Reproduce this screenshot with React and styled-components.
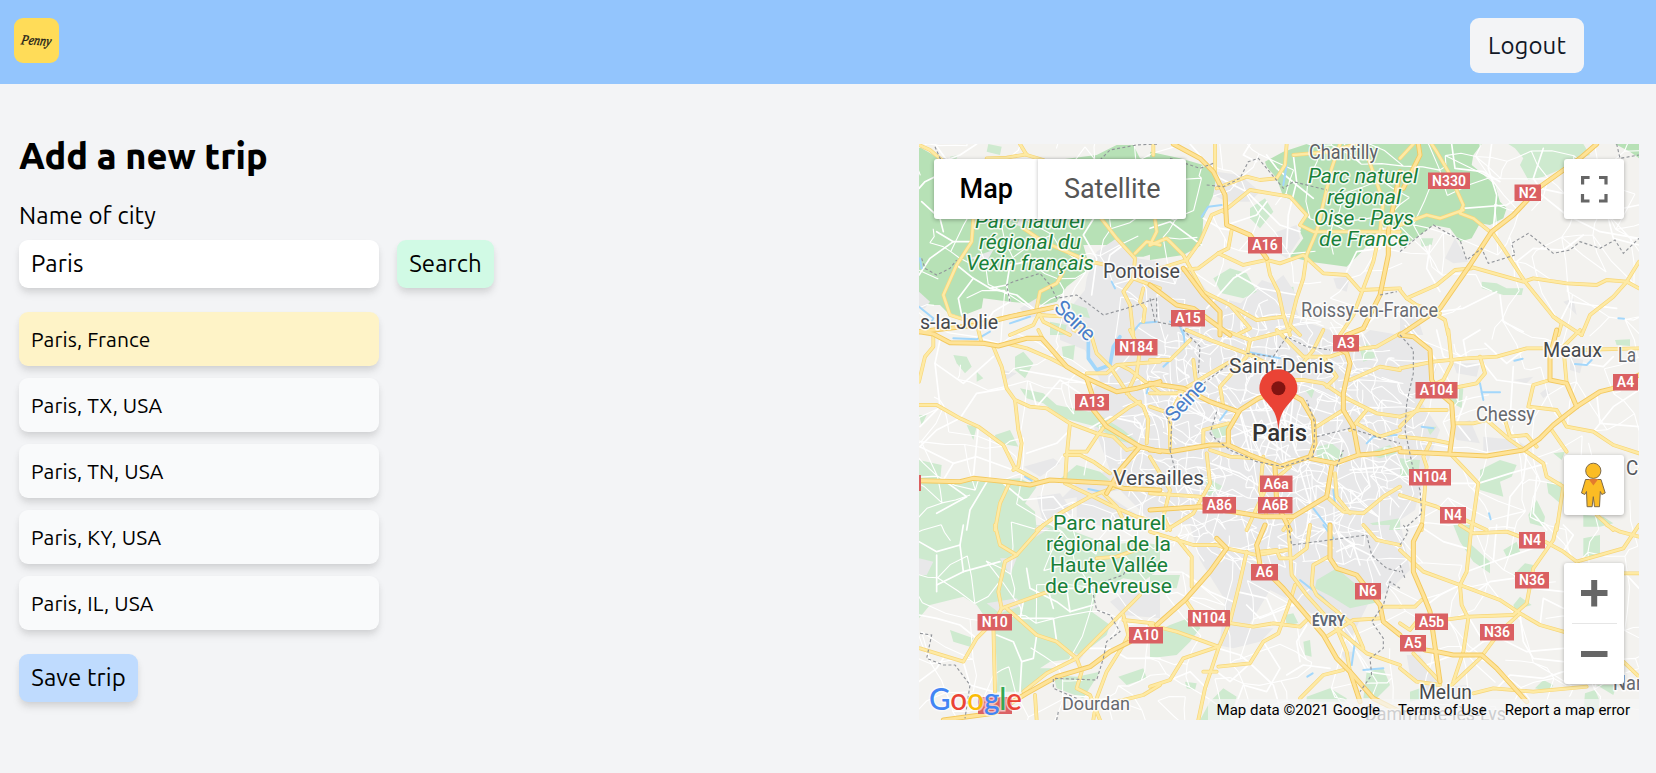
import React from "react";
import styled, { createGlobalStyle } from "styled-components";

const GlobalStyle = createGlobalStyle`
  *, *::before, *::after { box-sizing: border-box; }
  body {
    margin: 0;
    background: #f3f4f6;
    color: #000;
    font-family: Ubuntu, "Noto Sans", "Open Sans", sans-serif;
  }
  button, input { font: inherit; color: inherit; border: 0; }
`;

const softShadow = "0 6px 9px -1.5px rgba(0,0,0,.1), 0 3px 6px -1.5px rgba(0,0,0,.06)";

const Header = styled.header`
  display: flex;
  justify-content: space-between;
  align-items: flex-start;
  height: 84px;
  padding: 18px 72px 0 14px;
  background: #93c5fd;
`;

const Logo = styled.div`
  display: flex;
  align-items: center;
  justify-content: center;
  width: 45px;
  height: 45px;
  border-radius: 9px;
  background: #ffdc58;
  color: #1b1a17;
`;

const LogoutButton = styled.button`
  width: 114px;
  height: 55px;
  padding: 0 0 1px;
  border-radius: 9px;
  background: #f3f4f6;
  color: #111827;
  font-size: 24px;
  letter-spacing: 0.1px;
`;

const Main = styled.main`
  display: flex;
  justify-content: space-between;
  align-items: flex-start;
  padding: 60px 17px 0 19px;
`;

const TripForm = styled.form`
  display: flex;
  flex-direction: column;
  align-items: flex-start;
`;

const Title = styled.h1`
  margin: -12px 0 0;
  font-size: 36px;
  line-height: 48px;
  font-weight: 800;
`;

const Label = styled.label`
  margin-top: 18px;
  font-size: 24px;
  line-height: 36px;
  letter-spacing: 0.1px;
`;

const SearchRow = styled.div`
  display: flex;
  gap: 18px;
  margin-top: 6px;
`;

const CityInput = styled.input`
  width: 360px;
  height: 48px;
  padding: 0 12px 2px;
  border-radius: 9px;
  background: #fff;
  box-shadow: ${softShadow};
  font-size: 24px;
  letter-spacing: 0.15px;
  outline: none;
`;

const ActionButton = styled.button`
  width: ${(p) => p.$width}px;
  height: 48px;
  padding: 0 0 2px;
  border-radius: 9px;
  background: ${(p) => p.$tone};
  box-shadow: ${softShadow};
  font-size: 24px;
  letter-spacing: 0.1px;
`;

const Results = styled.ul`
  display: flex;
  flex-direction: column;
  gap: 12px;
  margin: 24px 0;
  padding: 0;
  list-style: none;
`;

const Result = styled.li`
  display: flex;
  align-items: center;
  width: 360px;
  height: 54px;
  padding: 0 12px;
  border-radius: 9px;
  background: ${(p) => (p.$selected ? "#fef3c7" : "#f9fafb")};
  box-shadow: ${softShadow};
  font-size: 21px;
  letter-spacing: 0.12px;
`;

const MapFrame = styled.section`
  position: relative;
  width: 720px;
  height: 576px;
  overflow: hidden;
  background: #f3f2ef;
  font-family: Roboto, "Liberation Sans", sans-serif;
`;

const MapCanvas = styled.svg`
  display: block;
  width: 100%;
  height: 100%;
`;

const MapTypeBar = styled.div`
  position: absolute;
  top: 15px;
  left: 15px;
  display: flex;
  width: 252px;
  height: 60px;
  border-radius: 3px;
  background: #fff;
  box-shadow: 0 1px 4px rgba(0, 0, 0, 0.3);
`;

const MapType = styled.button`
  width: ${(p) => p.$width}px;
  padding: 0 0 0 1px;
  background: none;
  color: ${(p) => (p.$active ? "#000" : "#565656")};
  font-size: 27px;
  font-weight: ${(p) => (p.$active ? 500 : 400)};
  & + & { box-shadow: -1px 0 3px rgba(0, 0, 0, 0.16); }
`;

const Control = styled.div`
  position: absolute;
  right: 15px;
  top: ${(p) => p.$top}px;
  display: flex;
  flex-direction: column;
  width: 60px;
  height: ${(p) => p.$height || 60}px;
  border-radius: 3px;
  background: #fff;
  box-shadow: 0 1px 4px rgba(0, 0, 0, 0.3);
  svg { display: block; }
`;

const Attribution = styled.div`
  position: absolute;
  right: 0;
  bottom: 0;
  display: flex;
  height: 21px;
  font-size: 15px;
  line-height: 22px;
  span {
    padding: 0 9px;
    background: rgba(245, 245, 245, 0.72);
    white-space: nowrap;
  }
`;

/* Map geometry. Each sector keeps its own origin and is drawn at one third scale. */
const sectors = [
  {
    at: [910, 135],
    forest: ["27,35 70,60 120,90 240,70 400,80 560,60 620,30 670,30 690,70 750,60 750,350 700,365 670,365 600,330 520,330 540,400 470,455 440,500 400,510 300,500 220,490 215,520 150,545 110,530 90,510 27,510"],
    park: ["235,27 275,35 270,60 230,50", "420,560 470,570 465,600 420,600", "120,65 145,60 130,90", "470,500 530,520 540,550 500,540"],
    town: ["27,470 60,500 45,520 27,520", "330,250 350,250 345,280 320,270", "560,350 620,310 680,370 750,380 750,600 620,600 600,530 520,500 530,430", "180,370 250,345 230,380", "330,520 380,490 410,540 350,550"],
    motorway: ["27,590 200,570 300,545 440,515"],
    road: ["27,30 60,45 95,75", "330,27 350,60 400,75", "230,70 290,68 350,58", "190,252 185,320 140,390 100,480 120,540 200,565 370,530", "460,410 440,445 390,470 380,520 400,560 480,600", "340,280 400,320 470,350 540,380 580,388", "575,252 620,310 675,370 670,430 750,460", "675,355 710,320 750,330", "670,430 640,470 660,510 670,600", "385,540 370,570 300,600", "385,540 470,545 540,590", "700,460 690,500 705,520 700,560"],
    street: ["27,160 45,140 75,125", "35,200 90,250 100,290", "27,420 60,370 130,320 185,320", "80,290 130,320", "140,390 190,430 240,460 320,480 370,520", "240,460 290,450 300,390 400,370", "290,450 300,500 250,530 230,560", "190,430 145,490 155,540", "550,252 520,300 560,370 545,480", "640,330 600,360 590,400", "75,27 110,75 150,60 200,27"],
    border: ["75,35 90,70 115,75", "570,75 600,45 680,30 745,27", "300,500 290,450 310,440 390,415 420,450 440,490 500,480 580,540 650,520 740,490 740,550", "35,370 45,400 80,420 120,400 140,375"],
    water: ["27,515 70,550 60,570", "300,565 360,545", "605,440 615,460", "30,370 35,400", "670,590 690,565 740,560"],
  },
  {
    at: [1150, 135],
    forest: ["0,50 90,70 160,90 205,115 190,180 160,250 155,330 100,360 0,375", "345,80 400,50 470,27 750,27 750,270 690,280 640,345 590,395 480,380 420,365 460,310 450,290 465,240 440,200 400,185 380,130 350,95"],
    park: ["190,430 240,400 290,415 320,470 280,490 215,475", "300,220 345,190 370,230 330,280 300,250", "385,460 430,455 435,490 400,510", "335,490 365,500 345,540"],
    town: ["200,110 270,120 330,170 300,200 230,200 190,180", "380,290 440,270 450,310 410,370 360,340", "550,430 600,425 590,470 560,460", "0,440 120,400 180,480 290,510 400,420 440,480 430,600 0,600"],
    motorway: ["70,27 150,70 190,110 225,180 230,270 300,300 350,370", "100,400 160,480 210,530 210,600", "0,450 80,510 130,520 240,600", "750,110 715,290 715,360 690,480 640,580 590,600"],
    road: ["350,370 360,420 385,470 400,540 420,600", "195,27 195,110", "410,27 405,90 380,130 330,135 290,125 200,160", "220,230 300,165 420,185 470,240 450,270 490,290 600,290 750,290", "0,410 110,375 150,320 185,240 220,225", "245,285 235,340 205,355 145,400 100,405", "205,355 280,390 350,375 390,385 460,360 520,415 590,420 630,465 750,460", "0,330 50,310 100,360 160,470 240,510 320,555 400,545", "570,27 545,100 500,290 470,360 460,430 440,490 420,570 450,600", "690,290 670,380 610,540 570,600", "240,510 300,580 260,600", "430,60 540,50 620,27", "10,27 10,60", "15,252 20,290 0,330", "640,27 700,200 690,290"],
    street: ["350,60 380,100 440,150 490,190", "430,60 440,140 415,240 410,340", "120,27 210,130 290,170 390,270 450,290", "0,280 60,260 155,330", "230,270 320,240 350,200", "170,520 250,430 300,400", "260,420 330,460 440,480", "160,250 210,280 240,285", "300,27 280,60 320,80", "590,410 620,350 690,340", "640,580 700,520 750,530"],
    border: ["170,150 220,155 270,130 295,80 325,70 350,100 400,160 430,140 530,165", "60,70 150,100 190,85", "690,480 740,470", "0,490 15,560 100,575"],
    water: ["155,245 175,215 215,210", "60,560 90,575 100,600", "410,90 400,150"],
  },
  {
    at: [1400, 135],
    forest: ["0,27 245,27 220,60 215,90 245,115 285,150 300,200 320,220 310,250 270,270 240,265 215,310 180,320 150,280 100,270 60,300 0,340", "645,27 717,27 717,70 690,50"],
    park: ["325,27 550,27 570,60 520,75 490,100 430,125 385,135 360,90 370,70 345,40", "245,440 290,445 320,460 370,460 365,480 310,480 245,460", "60,310 100,310 95,330 65,335"],
    town: ["135,370 165,310 205,380 160,385", "0,550 50,540 70,600 0,600", "490,500 520,490 530,540"],
    motorway: ["55,27 60,60 10,160", "590,27 540,70 420,155 340,240 275,290 210,390 120,520 0,600"],
    road: ["0,70 40,27", "95,27 110,50 145,110 190,210 180,235 220,250 270,290", "0,270 80,240 120,250 190,225", "275,290 310,340 375,440 460,545 545,600", "210,395 370,440 400,430 500,445 590,450 620,435 680,440 717,460", "717,380 680,440 640,485 570,540 545,600", "0,465 20,490 110,450 165,405 215,400", "110,540 135,555 145,600", "20,490 50,510 120,535", "460,545 485,565 475,600"],
    street: ["155,27 165,100 250,110 300,140", "275,27 265,100 290,180 280,280", "430,40 400,130 420,160 490,175", "190,220 320,210 400,160 500,240 600,290 717,310", "560,250 620,230 717,210", "290,470 190,520 120,530", "375,440 350,380 400,340 490,345 550,300", "500,440 510,500 480,560", "300,480 310,560 370,590", "510,500 570,510 650,520", "90,330 80,400 120,470", "620,230 640,310 717,330"],
    border: ["0,350 60,300 100,270 180,315 200,375 245,340 265,385 345,360 335,325 385,295 460,355 510,345 540,320 600,340 645,315 670,355 717,310", "650,27 660,70 717,60"],
    water: ["655,550 672,551"],
  },
  {
    at: [910, 330],
    park: ["315,80 340,65 370,100 345,145 315,120", "130,75 170,80 185,110 165,130 140,100", "455,50 495,45 490,90 460,85", "330,175 400,190 440,225 560,250 640,300 700,350 620,330 560,290 460,265 400,220 350,205", "255,315 300,300 325,350 260,340", "27,390 95,405 90,455 27,455", "27,455 330,445 380,470 345,520 375,545 380,600 27,600", "440,455 500,405 570,425 600,450 500,455", "200,125 220,145 200,155", "170,285 200,290 190,330", "27,255 50,255 35,285"],
    town: ["340,410 430,385 450,400 390,440", "380,500 450,490 490,550 400,580", "500,480 600,500 690,560 600,600 500,560", "280,120 320,130 290,150"],
    motorway: ["27,5 70,12 120,38 220,40 265,48 350,25 395,25 470,110 530,145 620,185 680,175 750,155", "530,145 545,190 550,240 590,290 690,350 750,365", "27,452 150,455 190,445 290,455 360,465 420,450 600,460 640,475 750,480", "690,350 630,420 590,490"],
    road: ["27,155 45,80 70,50 70,10", "250,50 275,110 290,175 315,210 325,300 335,340 325,410 310,420", "315,210 360,230 410,235 480,280 560,310 610,320 650,360 690,350", "27,225 80,225 150,265 205,290 280,345 315,415 380,450", "480,280 470,380 465,460 540,495 600,525 680,560 750,580", "475,365 530,365 560,320 590,280 660,230 690,215", "465,375 510,375 550,395 600,430", "300,455 270,520 255,600", "380,600 450,550 540,500 620,470", "290,40 350,55 420,85 470,110", "545,20 560,70 600,110 660,200 700,230 715,270 710,340", "530,130 590,130 620,105 750,95", "205,0 215,40", "385,0 400,30", "490,0 540,20", "630,105 660,120 750,190", "580,490 620,530 650,590", "660,0 690,60 680,130 650,190"],
    street: ["90,30 75,100 90,230 30,290", "75,100 160,160 250,80", "150,265 200,190 290,175", "205,290 190,440", "30,350 80,300 150,265", "30,350 130,400 200,380 310,420", "130,400 100,450 170,500 80,550", "240,320 240,440 180,540 170,600", "330,120 440,140 530,160", "360,160 380,230 450,150 510,190", "350,370 440,340 480,300", "530,300 600,260 690,280 700,320", "280,460 340,510 430,500 480,560"],
    border: [],
    water: ["535,30 535,85 560,120 600,105 610,50 630,20", "130,25 200,28 240,5", "535,477 580,487", "345,440 365,452", "710,190 715,170"],
    wide: [0],
  },
  {
    at: [1150, 330],
    park: ["180,290 250,275 235,320 195,325", "500,350 545,340 580,370 570,410 500,390", "650,370 720,345 740,370 690,385", "660,580 750,565 750,600 690,600", "140,510 200,510 190,535", "165,440 220,470 175,500", "630,60 650,40 680,80 640,95", "465,180 495,175 485,205"],
    town: [],
    motorway: ["325,205 270,240 235,300 235,345 300,375 390,410 480,380 495,340 490,270 455,210 400,180 325,205", "575,60 590,70 600,100 580,190 580,240 610,290 625,370", "480,385 555,400 625,375 690,370 750,355", "0,360 60,365 180,345 235,345", "0,160 100,175 180,215 265,245", "545,410 530,500 430,560 340,560 250,545 150,530 0,540", "375,410 380,520 420,600"],
    road: ["110,0 180,30 290,70 350,100", "250,90 180,130 80,190 0,190", "0,490 150,500", "60,360 60,250 100,180", "500,290 580,240", "220,0 300,30 290,80 210,170 220,230", "400,150 460,150 520,160 580,200", "380,0 410,30 460,80 540,80 600,60", "600,60 680,50 750,10", "520,0 490,60 450,110", "600,150 690,110 750,120", "580,200 680,250 750,260", "0,380 60,480 40,560 60,600", "170,370 180,460 130,550 50,600", "180,360 240,380 320,385", "420,410 350,470 290,600", "530,500 580,545 640,550 700,500 750,470", "555,430 560,500 600,550", "430,560 400,600", "0,90 60,90 120,30", "130,90 140,170 110,200", "300,30 420,0", "620,280 690,320 750,300", "650,240 600,300", "0,230 60,250", "235,280 160,300 160,350", "520,80 560,140 530,170", "340,380 330,480 350,560"],
    street: ["240,320 330,290 400,270 490,300", "300,230 330,310 420,380", "400,180 400,260 440,370", "270,250 300,370", "340,210 370,300 340,390", "430,200 420,290 480,340", "600,420 700,410 750,440", "640,380 660,470 600,520", "180,400 270,430 330,470", "450,420 480,520 470,600", "120,230 180,270 240,270"],
    border: ["60,360 65,290 40,240", "145,130 150,50 100,0", "160,160 240,100", "180,310 200,330 240,360 320,395 400,410 490,380 495,280 470,210", "200,245 180,310", "290,70 370,80 410,20 470,50 540,60", "500,320 600,295 680,320 750,340", "560,410 580,360", "60,360 75,420"],
    water: ["100,0 105,50 40,110", "210,270 240,230", "290,65 390,85", "650,340 670,320 740,315", "550,480 555,520", "490,535 540,600"],
  },
  {
    at: [1400, 330],
    park: ["240,420 300,390 350,405 335,440 300,455 310,500 240,480", "0,385 60,390 55,430 0,440", "440,455 485,455 480,520 445,490", "385,555 410,510 435,560 430,590 390,580", "460,370 495,365 485,390", "550,555 610,560 640,580 600,590 550,590", "645,30 690,28 690,48 650,45", "150,180 190,175 185,235 150,215", "80,290 110,290 90,315"],
    town: ["150,290 210,270 240,340 170,330", "160,100 240,100 230,140 170,130", "420,190 440,175 450,190 430,205", "510,80 550,90 540,130 510,120", "340,150 400,140 380,160", "250,320 350,330 380,350 250,365"],
    motorway: ["0,365 100,370 260,378 370,360 420,325 460,285 530,230 600,185 640,175 717,135", "0,15 40,20 90,60 95,150 120,190 155,220 160,290 150,365", "470,0 450,80 450,150 500,160 530,230"],
    road: ["0,115 100,95 200,85 290,80 380,55 430,55", "145,0 155,100 130,150 90,170 50,240 0,290", "540,0 490,50 500,160", "450,150 400,165 385,230 470,240 500,290 580,305 640,345 717,370", "0,320 100,330 150,340", "165,280 220,280 260,270 330,330 430,400 440,440 490,470 470,600", "455,300 500,365", "150,370 235,460 215,600", "90,340 70,380 80,410 65,600", "0,495 110,530 260,600", "240,80 255,130 230,160 130,180", "315,270 330,320 380,315 410,350", "530,60 717,55", "590,555 640,600", "0,260 60,240 140,240"],
    street: ["110,0 130,80 200,110 250,100", "200,85 190,30 240,0", "255,40 320,100 380,55", "235,460 330,430 440,400", "380,370 370,450 330,500 320,600", "110,430 140,460 235,460", "250,100 290,150 400,165", "340,110 330,270 390,240", "580,305 640,230 717,180", "590,190 600,280 717,290", "200,200 170,280 210,330", "410,440 400,550 440,600", "550,100 610,110 640,80"],
    border: ["0,15 40,60 40,130 20,220 15,300 40,420 60,480 65,550 20,590"],
    water: ["250,210 240,160", "245,187 300,187", "65,290 100,295", "343,92 368,86", "267,550 272,568", "525,102 560,105 575,90"],
  },
  {
    at: [910, 525],
    park: ["27,0 440,0 600,60 680,50 750,60 750,130 700,170 640,160 560,200 545,260 600,300 590,330 500,400 420,410 390,430 430,430 340,500 260,500 262,460 255,320 200,240 160,215 60,240 27,280", "120,315 190,340 180,365 130,350", "430,450 500,455 570,440 520,520 440,490", "625,455 700,430 710,460 650,480"],
    town: ["230,235 320,220 340,240 270,265", "27,100 70,110 50,150 27,150", "270,100 320,100 300,150", "600,230 680,180 750,200 750,280 640,270", "470,380 520,390 500,420", "380,0 420,10 370,40"],
    motorway: ["100,585 250,565 350,505 440,455 540,425 600,380 660,350"],
    road: ["255,0 270,60 320,90 400,0", "320,90 285,110 265,200 275,250 250,300 255,500", "275,250 400,205 470,185", "290,250 380,330 440,350 500,400 515,440 500,490 540,510 570,585", "30,370 160,410 200,340 250,290", "340,500 410,445 500,400 600,300 650,250 690,210", "640,270 655,330 640,360 590,440 560,520 550,585", "375,510 380,585", "640,285 730,295", "750,480 700,510 620,530", "560,100 620,95 690,70"],
    street: ["27,50 80,80 150,60 160,140 80,180 80,200", "160,140 270,110", "150,60 160,0", "80,90 80,180", "350,130 360,190 440,230 480,260 550,240", "340,230 330,280 430,280 440,350", "480,260 470,190 510,190", "260,330 310,350 335,410 330,500", "380,330 370,400 335,410", "200,340 150,300 80,280 27,270", "160,410 180,480 250,500", "27,470 80,430 100,400", "410,180 430,250", "540,370 600,370 650,400 750,400"],
    border: ["30,325 65,330 50,400 100,420 135,420 180,480 165,580", "550,210 560,255 600,270 630,320 590,350 580,400 560,465 430,460 430,490 500,520", "440,585 445,560", "580,170 640,150 660,110"],
    water: [],
  },
  {
    at: [1150, 525],
    park: ["500,165 560,130 620,180 690,230 600,250 545,215 495,190", "470,515 540,490 590,520 590,530 470,530", "650,440 700,430 720,480 680,520 640,520", "180,530 220,490 260,515 240,585 150,585", "405,270 430,265 445,295 410,300", "460,350 480,345 485,395 465,390", "60,300 140,270 150,310 120,350 80,390 0,400 0,330", "0,150 90,150 80,190 0,190", "105,470 140,475 135,495 110,490", "660,0 720,0 710,20 680,25"],
    town: ["215,330 290,310 370,310 330,350 250,370 200,360", "570,380 610,380 600,430", "470,0 720,0 700,100 560,110 480,60"],
    motorway: ["20,300 105,225 180,140 230,70 200,40", "345,0 320,60 330,120 400,190 460,260 520,330 560,400 600,440 630,530", "540,0 540,100 560,130 620,150 690,240 700,290 750,330", "600,440 670,520 750,560"],
    road: ["230,70 320,90 410,75", "290,80 270,170 240,290 205,370 165,490 145,585", "245,295 310,305 370,295 450,305 470,285", "0,300 80,320 205,365", "0,485 60,465 100,400 205,365", "205,425 300,415 340,350 385,325 420,230 435,180", "110,230 130,260 150,270", "80,40 125,95 125,185", "0,20 130,60 200,60 230,70", "415,0 425,150 470,210 560,310 650,385 750,420", "560,310 590,380 600,440", "450,520 520,450 580,435", "530,335 610,285 690,280", "700,245 750,245", "640,0 680,45 750,60", "480,0 470,70 430,100 390,100 380,75 330,80", "535,95 490,120 485,180 500,210 610,300 640,370", "160,440 200,440"],
    street: ["110,150 180,200 250,230", "260,200 350,220 380,290", "205,370 270,390 300,415 370,480 400,585", "300,415 240,470 200,440", "60,465 120,440 170,490", "340,350 390,430 350,500 280,480 250,560", "410,450 460,420 540,430", "290,240 330,280 430,240", "470,300 440,350 450,410", "560,80 600,60 660,90 690,150", "620,380 650,440 720,450", "570,30 610,60 630,120"],
    border: ["415,0 425,60 650,30 665,90 710,130 750,140", "750,190 720,170 700,240 665,290 700,340 700,370 660,400 665,450 630,500"],
    water: ["450,165 520,220 570,270", "615,350 605,420", "472,455 488,445", "640,435 700,430", "520,0 550,40"],
  },
  {
    at: [1400, 525],
    park: ["160,0 210,0 215,60 270,110 270,145 220,110 180,50", "310,75 350,50 360,80 320,95", "550,40 600,30 600,90 550,95", "340,240 360,215 395,240 345,255", "340,150 375,115 400,120 395,150", "405,490 430,465 460,480 450,500", "555,505 585,495 600,530 600,560 550,560", "590,480 650,480 640,510", "30,500 60,490 70,520 30,530"],
    town: ["20,390 60,390 120,480 80,500 30,450", "90,490 200,480 210,520 130,560"],
    motorway: ["65,0 40,50 40,140 70,210 90,260 120,470", "75,375 110,380 160,390 245,390 290,430 380,530"],
    road: ["0,75 70,140 180,180 300,225 360,265 420,300 490,320", "215,0 200,140 180,180 185,240 205,280 190,380 160,470", "145,283 205,275 340,270 380,235 400,130 460,45 470,0", "360,265 300,320 240,400 155,480", "180,0 220,25 320,20 360,35", "435,50 490,80 530,110 670,70 717,0", "620,0 660,20 717,35", "670,145 717,145", "0,245 45,245 65,225", "40,385 120,470", "220,505 280,490 400,500 560,485", "0,430 50,470 120,480", "670,410 717,455", "0,295 30,315 50,290"],
    street: ["70,10 130,50 200,70", "200,140 280,110 340,90 430,60", "280,110 290,0", "180,180 120,210 80,240", "230,200 270,170 340,160", "360,265 370,350 400,400 490,410", "205,275 250,350 300,340 380,380 490,370", "400,190 490,200", "420,300 430,220 490,250", "160,390 80,420", "290,490 330,450 430,460 490,440", "490,80 520,30 490,0", "717,190 680,150", "250,350 210,380"],
    border: ["0,120 15,160", "0,60 25,20 10,0"],
    water: [],
  },
];

const townCore = "1060,320 1085,290 1095,255 1120,240 1140,260 1170,285 1200,300 1230,315 1262,280 1290,290 1300,320 1330,330 1350,345 1370,330 1400,335 1430,345 1436,370 1420,400 1440,430 1425,470 1415,510 1400,520 1410,570 1390,590 1370,600 1350,640 1330,625 1290,600 1270,590 1240,640 1220,640 1225,600 1200,560 1190,525 1150,520 1130,500 1120,490 1060,500 1080,480 1110,470 1095,430 1085,400 1100,380 1085,350 1060,340";

const shields = [
  ["A16", 1248, 237, 34], ["A15", 1171, 310, 34], ["N330", 1428, 172.5, 42], ["N2", 1514.5, 184.5, 26.5],
  ["N184", 1115, 339, 42.5], ["A13", 1075, 394, 34], ["A3", 1333, 335, 26], ["A104", 1415.5, 382, 42],
  ["A4", 1613, 374, 25], ["N104", 1409, 469, 42], ["N4", 1440, 507, 26], ["A6a", 1260, 475.5, 32.5],
  ["A6B", 1258, 497, 34.5], ["A86", 1202.5, 497, 33.5], ["N10", 977.5, 614, 34.5], ["A10", 1129, 627, 34],
  ["N104", 1188, 610, 42], ["A6", 1251, 564, 27], ["N6", 1355, 583, 26], ["N4", 1519, 532, 26],
  ["N36", 1515, 572, 34], ["N36", 1480, 624, 34], ["A5b", 1415, 613.5, 33], ["A5", 1400, 635, 26],
];

const parkInk = "#188038";
const places = [
  ["Chantilly", 1309, 159, 69, { fill: "#5d6166" }],
  ["Parc naturel", 1308, 183, 110, { fill: parkInk, italic: true, size: 21 }],
  ["régional", 1327, 204, 74, { fill: parkInk, italic: true, size: 21 }],
  ["Oise - Pays", 1314, 225, 100, { fill: parkInk, italic: true, size: 21 }],
  ["de France", 1319, 246, 90, { fill: parkInk, italic: true, size: 21 }],
  ["Parc naturel", 975, 228, 110, { fill: parkInk, italic: true, size: 21 }],
  ["régional du", 979, 249, 102, { fill: parkInk, italic: true, size: 21 }],
  ["Vexin français", 966, 270, 128, { fill: parkInk, italic: true, size: 21 }],
  ["Parc naturel", 1053, 530, 113, { fill: parkInk, size: 21 }],
  ["régional de la", 1046, 551, 125, { fill: parkInk, size: 21 }],
  ["Haute Vallée", 1050, 572, 118, { fill: parkInk, size: 21 }],
  ["de Chevreuse", 1045, 593, 127, { fill: parkInk, size: 21 }],
  ["Pontoise", 1103, 278, 77, {}],
  ["s-la-Jolie", 920, 329, 78, {}],
  ["Roissy-en-France", 1301, 317, 137, { fill: "#6a6d72" }],
  ["Saint-Denis", 1229, 373, 105, {}],
  ["Paris", 1252, 441, 55, { fill: "#333", size: 23, weight: 500 }],
  ["Versailles", 1113, 485, 91, {}],
  ["ÉVRY", 1312, 626, 33, { fill: "#5c6675", size: 14, weight: 700 }],
  ["Dourdan", 1062, 710, 68, { fill: "#66696e", size: 18.5 }],
  ["Melun", 1419, 699, 53, {}],
  ["Meaux", 1543, 357, 59, {}],
  ["La", 1618, 362, 18, { fill: "#66696e" }],
  ["Co", 1626, 475, 23, { fill: "#55585c" }],
  ["Chessy", 1476, 421, 59, { fill: "#66696e" }],
  ["Nan", 1613, 690, 33, { fill: "#66696e" }],
  ["Dammarie-lès-Lys", 1365, 721, 141, { fill: "#66696e" }],
];

/* Jittered lattice of local streets; a fixed seed keeps it the same on each render. */
function streetMesh(seed, step, keep, inside) {
  let s = seed;
  const rand = () => (s = (s * 16807) % 2147483647) / 2147483647;
  const cols = Math.ceil(720 / step) + 2;
  const rows = Math.ceil(576 / step) + 2;
  const nodes = [];
  for (let r = 0; r < rows; r++)
    for (let c = 0; c < cols; c++)
      nodes.push([919 + (c - 0.5 + (rand() - 0.5) * 0.95) * step, 144 + (r - 0.5 + (rand() - 0.5) * 0.95) * step]);
  let d = "";
  const link = (a, b) => {
    if (!b || rand() > keep || !inside(a[0], a[1])) return;
    const mx = (a[0] + b[0]) / 2 + (rand() - 0.5) * step * 0.25;
    const my = (a[1] + b[1]) / 2 + (rand() - 0.5) * step * 0.25;
    d += `M${a[0].toFixed(1)},${a[1].toFixed(1)}L${mx.toFixed(1)},${my.toFixed(1)}L${b[0].toFixed(1)},${b[1].toFixed(1)}`;
  };
  for (let r = 0; r < rows - 1; r++)
    for (let c = 0; c < cols - 1; c++) {
      const i = r * cols + c;
      link(nodes[i], nodes[i + 1]);
      link(nodes[i], nodes[i + cols]);
      if (rand() > 0.65) link(nodes[i], nodes[i + cols + 1]);
    }
  return d;
}

const ruralMesh = streetMesh(4211, 29, 0.55, () => true);
const urbanMesh = streetMesh(977, 11, 0.62, (x, y) => ((x - 1268) / 150) ** 2 + ((y - 435) / 135) ** 2 < 1);

function Layer({ kind, shape = "polyline", ...paint }) {
  const Shape = shape;
  return sectors.map((sector) => (
    <g key={sector.at.join()} transform={`translate(${sector.at[0]} ${sector.at[1]}) scale(.33333)`} {...paint}>
      {(sector[kind] || []).map((points, i) => (
        <Shape key={i} points={points} strokeWidth={kind === "water" && sector.wide?.includes(i) ? 11 : undefined} />
      ))}
    </g>
  ));
}

function Place({ text, x, y, width, opts }) {
  return (
    <text
      x={x}
      y={y}
      textLength={width}
      lengthAdjust="spacingAndGlyphs"
      fill={opts.fill || "#46494d"}
      fontSize={opts.size || 19.5}
      fontStyle={opts.italic ? "italic" : "normal"}
      fontWeight={opts.weight || 400}
    >
      {text}
    </text>
  );
}

const wordmark = [["G", "#4285f4"], ["o", "#ea4335"], ["o", "#fbbc04"], ["g", "#4285f4"], ["l", "#34a853"], ["e", "#ea4335"]];

function ParisMap() {
  const lines = { fill: "none", strokeLinejoin: "round", strokeLinecap: "round" };
  return (
    <MapCanvas viewBox="919 144 720 576" aria-label="Map of Paris">
      <rect x="919" y="144" width="720" height="576" fill="#f3f2ef" />
      <polygon points={townCore} fill="#e8e8e9" />
      <Layer kind="park" shape="polygon" fill="#ceeacf" />
      <Layer kind="forest" shape="polygon" fill="#b7e1b6" />
      <Layer kind="town" shape="polygon" fill="#e8e8e9" />
      <path d={ruralMesh} fill="none" stroke="#fff" strokeWidth="1.1" />
      <path d={urbanMesh} fill="none" stroke="#fff" strokeWidth="1.1" />
      <Layer kind="street" stroke="#fff" strokeWidth="5" {...lines} />
      <Layer kind="water" stroke="#a3d7fb" strokeWidth="6" {...lines} />
      <Layer kind="road" stroke="#f7d679" strokeWidth="11.5" {...lines} />
      <Layer kind="road" stroke="#feeaa4" strokeWidth="7.5" {...lines} />
      <Layer kind="motorway" stroke="#f3c95f" strokeWidth="15" {...lines} />
      <Layer kind="motorway" stroke="#fee398" strokeWidth="9.5" {...lines} />
      <Layer kind="border" stroke="#92959a" strokeWidth="3.4" strokeDasharray="9 7" fill="none" />

      <g stroke="#fff" strokeWidth="3" strokeOpacity=".85" strokeLinejoin="round" paintOrder="stroke">
        {places.map(([text, x, y, width, opts]) => (
          <Place key={`${text}${x}`} text={text} x={x} y={y} width={width} opts={opts} />
        ))}
        <g fill="#4a7fc9" fontSize="21">
          <text transform="translate(1053 309) rotate(44)" textLength="48">Seine</text>
          <text transform="translate(1174 423) rotate(-47)" textLength="49">Seine</text>
        </g>
      </g>

      <rect x="919" y="475" width="2" height="16" fill="#db5f5f" />
      <rect x="978" y="697" width="34" height="17" fill="#db6263" />
      {shields.map(([name, x, y, w]) => (
        <g key={`${name}${x}`}>
          <rect x={x} y={y} width={w} height="16.5" fill="#da6062" />
          <text x={x + w / 2} y={y + 13.2} textAnchor="middle" fill="#fff" fontSize="14" fontWeight="600">
            {name}
          </text>
        </g>
      ))}

      <path d="M1278.4 430.5c-1.2-16-5-20.500-11-27.500-5-5.800-8-9-8-14.700a19 19 0 0 1 38 0c0 5.700-3 8.900-8 14.700-6 7-9.800 11.500-11 27.500z" fill="#ea4335" />
      <circle cx="1278.4" cy="388.3" r="7" fill="#811411" />

      <text
        x="929"
        y="709.5"
        textLength="93"
        lengthAdjust="spacingAndGlyphs"
        fontFamily="Lato, sans-serif"
        fontSize="31.5"
        fontWeight="500"
        stroke="#fff"
        strokeWidth="3"
        strokeOpacity=".6"
        paintOrder="stroke"
      >
        {wordmark.map(([letter, ink], i) => (
          <tspan key={i} fill={ink}>{letter}</tspan>
        ))}
      </text>
    </MapCanvas>
  );
}

const cities = ["Paris, France", "Paris, TX, USA", "Paris, TN, USA", "Paris, KY, USA", "Paris, IL, USA"];

export default function App() {
  return (
    <>
      <GlobalStyle />
      <Header>
        <Logo>
          <svg width="45" height="45" viewBox="0 0 45 45">
            <text x="7.500" y="27" transform="rotate(3 22 24) skewX(-8)" dx="3" textLength="30" lengthAdjust="spacingAndGlyphs" fontFamily='"Liberation Serif", serif' fontSize="14" fontStyle="italic" stroke="currentColor" strokeWidth=".35" fill="currentColor">
              Penny
            </text>
          </svg>
        </Logo>
        <LogoutButton>Logout</LogoutButton>
      </Header>
      <Main>
        <TripForm onSubmit={(e) => e.preventDefault()}>
          <Title>Add a new trip</Title>
          <Label htmlFor="city">Name of city</Label>
          <SearchRow>
            <CityInput id="city" defaultValue="Paris" />
            <ActionButton $width={97} $tone="#d1fae5">Search</ActionButton>
          </SearchRow>
          <Results>
            {cities.map((name, i) => (
              <Result key={name} $selected={i === 0}>{name}</Result>
            ))}
          </Results>
          <ActionButton $width={119} $tone="#bfdbfe">Save trip</ActionButton>
        </TripForm>
        <MapFrame>
          <ParisMap />
          <MapTypeBar>
            <MapType $width={103.5} $active>Map</MapType>
            <MapType $width={148.5}>Satellite</MapType>
          </MapTypeBar>
          <Control $top={15}>
            <svg width="60" height="60" fill="none" stroke="#666" strokeWidth="3.2">
              <path d="M18.600 25.500v-7h7M35 18.500h7v7M42 35v7h-7M25.500 42h-7v-7" />
            </svg>
          </Control>
          <Control $top={311}>
            <svg width="60" height="60" viewBox="0 0 60 60">
              <path d="M21.500 24.500h15.500l4.200 13.500-3.400 1.500-1.500-3-.8 15.200h-5l-1.200-10-1.200 10h-5l-.6-15.200-1.700 3-3.300-1.500z" fill="#fbbc24" stroke="#7d6a4a" strokeWidth="1" />
              <path d="M24.500 24h9.800l-4.900 6.500z" fill="#e37b2d" />
              <circle cx="29.300" cy="15.800" r="7.600" fill="#fbbc24" stroke="#7d6a4a" strokeWidth="1" />
            </svg>
          </Control>
          <Control $top={419} $height={121}>
            <svg width="60" height="121">
              <path d="M17 30h26.500M30.200 17v26.500M17 91h26.500" stroke="#666" strokeWidth="6" />
              <path d="M8 60.500h45" stroke="#e6e6e6" strokeWidth="1" />
            </svg>
          </Control>
          <Attribution>
            <span>Map data ©2021 Google</span>
            <span>Terms of Use</span>
            <span>Report a map error</span>
          </Attribution>
        </MapFrame>
      </Main>
    </>
  );
}
